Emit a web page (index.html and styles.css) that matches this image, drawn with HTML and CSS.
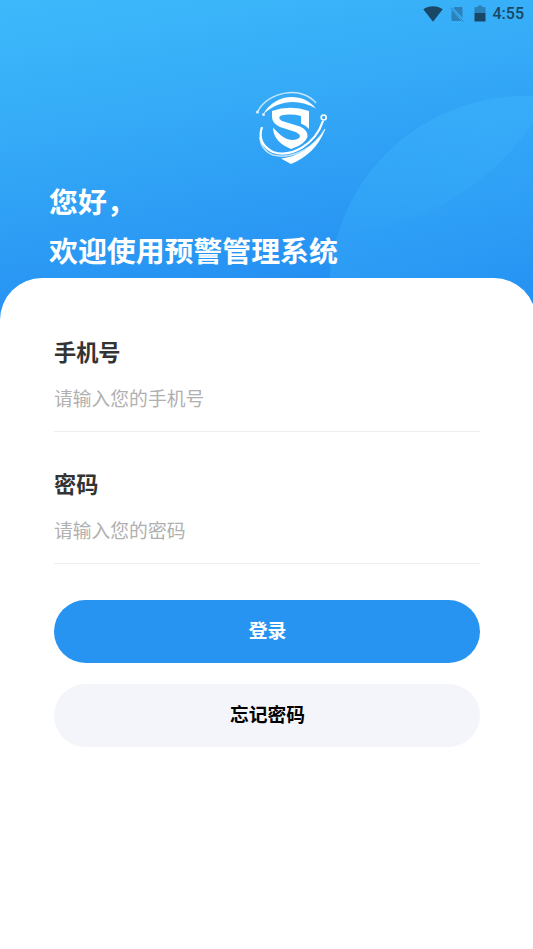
FILE: index.html
```html
<!DOCTYPE html>
<html lang="zh-CN">
<head>
<meta charset="utf-8">
<title>登录</title>
<link rel="stylesheet" href="styles.css">
</head>
<body>
<header class="hero">
  <svg class="hero-art" viewBox="0 0 533 330" aria-hidden="true">
    <defs>
      <linearGradient id="disc" x1="0" y1="0" x2="0" y2="1"><stop offset="0" stop-color="#36a9f8"/><stop offset=".25" stop-color="#2fa1f6"/><stop offset=".55" stop-color="#2491f3"/></linearGradient>
      <linearGradient id="lens" gradientUnits="userSpaceOnUse" x1="480" y1="120" x2="350" y2="240"><stop offset="0" stop-color="#3bb4fa" stop-opacity=".34"/><stop offset="1" stop-color="#3bb4fa" stop-opacity="0"/></linearGradient>
      <linearGradient id="edge" x1="0" y1="0" x2="1" y2="0"><stop offset="0" stop-color="#38adf9" stop-opacity=".3"/><stop offset=".6" stop-color="#38adf9" stop-opacity="0"/></linearGradient>
      <clipPath id="clip"><circle cx="525" cy="292" r="196"/></clipPath>
    </defs>
    <circle cx="525" cy="292" r="196" fill="url(#disc)" opacity=".8"/>
    <circle cx="525" cy="292" r="196" fill="url(#edge)"/>
    <circle cx="330" cy="-10" r="242" fill="url(#lens)" clip-path="url(#clip)"/>
  </svg>
  <div class="status">
    <svg class="wifi" viewBox="0 0 20 16"><path d="M.3 3.300C5.700-.7 14.300-.7 19.700 3.300L10 15.700z"/></svg>
    <svg class="sim" viewBox="0 0 14 16"><path d="M4.500 1h7q1 0 1 1v9.700L3.300 2.200zM1.500 4L11.300 15H2.500q-1 0-1-1z"/><path class="slash" d="M.5 1.700L13.500 15.700"/></svg>
    <svg class="battery" viewBox="0 0 12 17"><path class="empty" d="M.5 8V3q0-1 1-1H4V.5h4V2h2.500q1 0 1 1v5z"/><path d="M.5 8h11v8.500H.5z"/></svg>
    <span class="time">4:55</span>
  </div>
  <svg class="logo" viewBox="0 0 95 90" aria-hidden="true">
    <g class="lines">
      <path class="fine" d="M13 28C23 9 56 2 71 20"/>
      <circle class="dot" cx="12.500" cy="29" r="1.600"/>
      <circle class="dot" cx="18.500" cy="31.500" r="1.500"/>
      <circle cx="78.700" cy="34.500" r="2.500"/>
      <path class="sweep" d="M78 38C70 62 46 75 28 69C18 64 13 56 17 44"/>
      <path class="fine" d="M80 46C70 64 48 77 28 72C20 69 15 62 15 54"/>
    </g>
    <path d="M18 31.500C29 11 57 8 71 25.500C55 16 34 16 18 31.500z"/>
    <path d="M27 28Q45 21.500 64 28V46Q60 42 56 40.500V33Q46 30.500 36 32.500Q32 35 37 38L55 43.500Q63 47 62.500 54C59 61 53 63.500 46 66C36 62 28 55 28 44.500C35 52.500 41 57 48 57Q55 56 55 53Q54 50 49 48.500L35 44Q27 40 27 34z"/>
    <path d="M36 75.500C52 74 67 65 80 47C73 64 61 75 46 81z"/>
  </svg>
  <h1 class="greeting">您好，<br>欢迎使用预警管理系统</h1>
</header>
<main class="sheet">
  <form>
    <label class="field"><span class="label">手机号</span><input type="tel" placeholder="请输入您的手机号"></label>
    <label class="field"><span class="label">密码</span><input type="password" placeholder="请输入您的密码"></label>
    <button class="btn primary" type="button">登录</button>
    <button class="btn" type="button">忘记密码</button>
  </form>
</main>
</body>
</html>
```
FILE: styles.css
```css
* { box-sizing: border-box; }
body {
  margin: 0;
  height: 949px;
  overflow: hidden;
  background: #fff;
  font-family: "Noto Sans CJK SC", sans-serif;
}
.hero {
  position: relative;
  height: 330px;
  background: linear-gradient(170deg, #3db9fb 0%, #35aaf7 34%, #2b9af4 62%, #218af2 88%);
}
.hero-art { position: absolute; inset: 0; width: 533px; height: 330px; }
.status {
  position: relative;
  display: flex;
  height: 27px;
  padding-right: 9px;
  align-items: center;
  justify-content: flex-end;
  fill: #184866;
}
.wifi { width: 20px; height: 16px; margin-right: 7px; }
.sim { width: 14px; height: 16px; margin-right: 10px; fill: #2b82bb; }
.slash { stroke: #2b82bb; stroke-width: 1; }
.battery { width: 12px; height: 17px; margin-right: 7px; }
.empty { fill: #2b82bb; }
.time { font: 500 16px/28px Roboto, sans-serif; color: #184866; }
.logo {
  position: relative;
  display: block;
  width: 95px;
  height: 90px;
  margin: 56px 0 0 245px;
  fill: #fff;
}
.lines { fill: none; stroke: #fff; stroke-width: 1.6; }
.fine { stroke-width: 1.5; opacity: .7; }
.sweep { stroke-width: 2.2; }
.dot { fill: #fff; stroke: none; opacity: .8; }
.greeting {
  position: relative;
  margin: 3px 0 0 49px;
  font-size: 28.9px;
  font-weight: 700;
  line-height: 49px;
  color: #fff;
}
.sheet {
  position: relative;
  width: 536px;
  height: 671px;
  margin-top: -52px;
  padding: 53px 56px 0 54px;
  border-radius: 42px 42px 0 0;
  background: #fff;
}
.field {
  display: block;
  height: 132px;
}
.label {
  display: block;
  font-size: 22.2px;
  font-weight: 700;
  line-height: 40px;
  color: #333;
}
.field input {
  display: block;
  width: 100%;
  height: 61px;
  padding: 0 0 8px;
  border: 0;
  border-bottom: 1px solid #eee;
  background: none;
  font-family: inherit;
  font-size: 18.8px;
}
.field input::placeholder { color: #b0b0b0; }
.btn {
  display: block;
  width: 100%;
  height: 63px;
  margin: 21px 0 0;
  padding: 0 0 5px 1px;
  border: 0;
  border-radius: 32px;
  background: #f4f5fa;
  font-family: inherit;
  font-size: 18.8px;
  font-weight: 700;
  color: #000;
}
.primary { margin-top: 5px; background: #2894f2; color: #fff; }
```
